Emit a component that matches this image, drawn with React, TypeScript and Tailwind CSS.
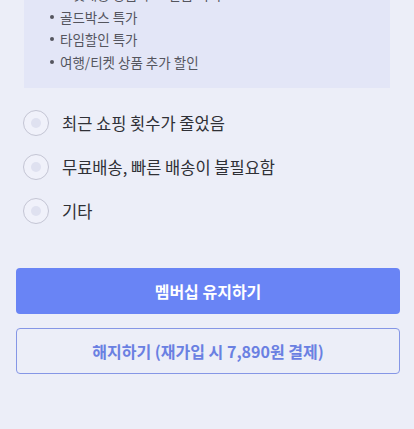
import { useState } from "react";

const benefits = [
  "로켓배송 상품 무료 반품 서비스",
  "골드박스 특가",
  "타임할인 특가",
  "여행/티켓 상품 추가 할인",
];

const reasons = [
  "최근 쇼핑 횟수가 줄었음",
  "무료배송, 빠른 배송이 불필요함",
  "기타",
];

function Radio({ label, checked, onSelect }: { label: string; checked: boolean; onSelect: () => void }) {
  return (
    <button onClick={onSelect} className="flex h-[44px] w-full items-center gap-[13px] text-left">
      <span className="flex h-[26px] w-[26px] items-center justify-center rounded-full border-[1.5px] border-[#c4c5d4] bg-[#f0f1fa]">
        <span className={`h-[10px] w-[10px] rounded-full ${checked ? "bg-[#6984f5]" : "bg-[#dfe1f0]"}`} />
      </span>
      <span className="text-[16.5px] text-[#2f3036]">{label}</span>
    </button>
  );
}

export default function App() {
  const [selected, setSelected] = useState<number | null>(null);

  return (
    <div
      className="-mt-[31px] min-h-[460px] bg-[#eceef8] pb-10"
      style={{ fontFamily: '"Noto Sans CJK KR", "Noto Sans", sans-serif' }}
    >
      {/* Benefits list */}
      <div className="mx-6 bg-[#e3e6f7] pb-[15px] pl-[26px] pt-[14px]">
        <ul>
          {benefits.map((b) => (
            <li key={b} className="flex h-[22.5px] items-center text-[13.5px] text-[#54555e]">
              <span className="mr-[6px] h-[4px] w-[4px] rounded-full bg-[#54555e]" />
              {b}
            </li>
          ))}
        </ul>
      </div>

      {/* Reasons */}
      <div className="mt-[13px] px-[23px]">
        {reasons.map((r, i) => (
          <Radio key={r} label={r} checked={selected === i} onSelect={() => setSelected(i)} />
        ))}
      </div>

      {/* Actions */}
      <div className="mt-[35px] flex flex-col gap-[14px] pl-[16px] pr-[14px]">
        <button className="h-[46px] rounded-[4px] bg-[#6984f5] text-[16px] font-bold text-white">
          멤버십 유지하기
        </button>
        <button className="h-[46px] rounded-[4px] border border-[#8596e6] text-[16px] font-semibold text-[#6a80e2]">
          해지하기 (재가입 시 7,890원 결제)
        </button>
      </div>
    </div>
  );
}
